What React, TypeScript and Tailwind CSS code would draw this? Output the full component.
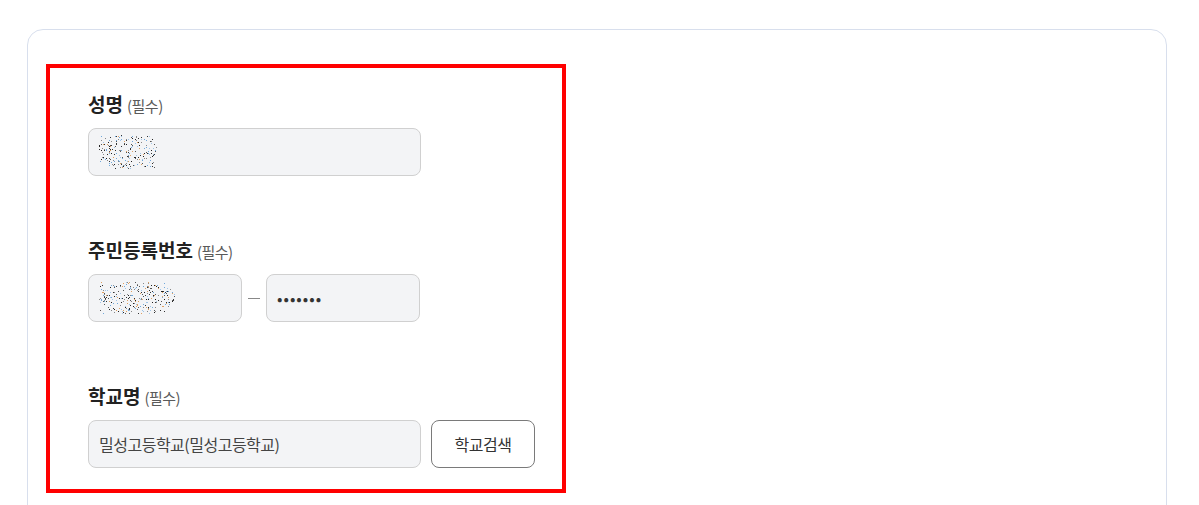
import React from 'react';

// masked text noise (deterministic)
function makeDots(seed: number, count: number, w: number, h: number) {
  let s = seed;
  const rand = () => {
    s = (s * 9301 + 49297) % 233280;
    return s / 233280;
  };
  const colors = ['#333333', '#555555', '#6fa8dc', '#e0a060', '#888888', '#9fc5e8', '#222222'];
  const dots: { x: number; y: number; c: string }[] = [];
  for (let i = 0; i < count; i++) {
    const x = Math.floor(rand() * w);
    const y = Math.floor(rand() * h);
    // denser in the middle
    const dx = (x - w / 2) / (w / 2);
    const dy = (y - h / 2) / (h / 2);
    if (dx * dx + dy * dy > 1.1 && rand() > 0.3) continue;
    dots.push({ x, y, c: colors[Math.floor(rand() * colors.length)] });
  }
  return dots;
}

const nameDots = makeDots(17, 260, 58, 34);
const rrnDots = makeDots(91, 320, 76, 32);

function Noise({ dots, w, h }: { dots: { x: number; y: number; c: string }[]; w: number; h: number }) {
  return (
    <svg width={w} height={h} viewBox={`0 0 ${w} ${h}`} className="block">
      {dots.map((d, i) => (
        <rect key={i} x={d.x} y={d.y} width={1} height={1} fill={d.c} />
      ))}
    </svg>
  );
}

function Label({ text }: { text: string }) {
  return (
    <div className="flex items-baseline h-[24px] mb-[12px]">
      <span className="text-[19px] font-bold text-[#222222] leading-[24px]">{text}</span>
      <span className="ml-[4px] text-[15px] text-[#5a5a5a] tracking-[-0.5px]">(필수)</span>
    </div>
  );
}

const inputBox = 'h-[48px] rounded-[8px] border border-[#d0d0d0] bg-[#f3f4f6] flex items-center pl-[10px]';

export default function App() {
  return (
    <main
      className="min-h-[505px] bg-white pt-[29px] pl-[27px] pr-[32px]"
      style={{ fontFamily: '"Noto Sans CJK KR", "Noto Sans", sans-serif' }}
    >
      <div className="w-[1140px] min-h-[500px] rounded-t-[16px] border border-[#d8dfed] pt-[34px] pl-[18px]">
        <div className="w-[520px] border-4 border-[#ff0000] pt-[24px] pb-[21px] pl-[38px]">
          {/* 성명 */}
          <section>
            <Label text="성명" />
            <div className={`${inputBox} w-[333px] pl-[8px]`}>
              <Noise dots={nameDots} w={58} h={34} />
            </div>
          </section>

          {/* 주민등록번호 */}
          <section className="mt-[62px]">
            <Label text="주민등록번호" />
            <div className="flex items-center">
              <div className={`${inputBox} w-[154px] pl-[2px]`}>
                <Noise dots={rrnDots} w={76} h={32} />
              </div>
              <span className="w-[24px] flex justify-center">
                <span className="block w-[12px] h-px bg-[#888888]" />
              </span>
              <div className={`${inputBox} w-[154px]`}>
                <span className="text-[16px] text-[#333333] tracking-[1px] leading-none">•••••••</span>
              </div>
            </div>
          </section>

          {/* 학교명 */}
          <section className="mt-[62px]">
            <Label text="학교명" />
            <div className="flex items-center gap-[10px]">
              <div className={`${inputBox} w-[333px]`}>
                <span className="text-[16px] text-[#444444] tracking-[-0.5px]">밀성고등학교(밀성고등학교)</span>
              </div>
              <button className="h-[48px] w-[104px] rounded-[8px] border border-[#7a7a7a] bg-white text-[16px] text-[#333333] tracking-[-0.5px]">
                학교검색
              </button>
            </div>
          </section>
        </div>
      </div>
    </main>
  );
}
